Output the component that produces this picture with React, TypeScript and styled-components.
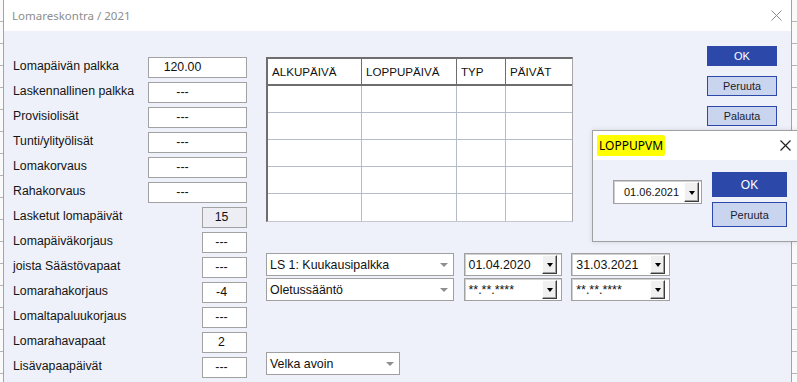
import styled, { createGlobalStyle } from 'styled-components'

const GlobalStyle = createGlobalStyle`
  html, body {
    margin: 0;
    padding: 0;
  }
  body {
    background: repeating-linear-gradient(to bottom, #fafafa 0 21px, #b4b4b4 21px 22px);
    font-family: 'Liberation Sans', Arial, sans-serif;
    overflow: hidden;
  }
`

const Screen = styled.div`
  position: relative;
  width: 797px;
  height: 382px;
  overflow: hidden;
`

const Dialog = styled.div`
  margin-left: 3px;
  width: 789px;
  height: 382px;
  box-sizing: border-box;
  border-left: 1px solid #a3a3a3;
  border-right: 1px solid #a3a3a3;
  background: #eef1fa;
  display: flex;
  flex-direction: column;
`

const TitleBar = styled.div<{ $height: number; $padLeft: number; $padRight: number }>`
  flex: none;
  height: ${p => p.$height}px;
  background: #fff;
  display: flex;
  align-items: center;
  justify-content: space-between;
  padding: 0 ${p => p.$padRight}px 0 ${p => p.$padLeft}px;
`

const WindowTitle = styled.span`
  font-family: 'Noto Sans', 'Open Sans', sans-serif;
  font-size: 11.5px;
  color: #8d8d8d;
`

const HighlightTitle = styled.span`
  font-family: 'Noto Sans', 'Open Sans', sans-serif;
  font-size: 12px;
  color: #000;
  background: #ffff00;
  padding: 2px 2px 2px 2px;
  border-radius: 2px;
`

const Body = styled.div`
  display: flex;
  align-items: flex-start;
  padding: 15px 0 0 9px;
`

const Form = styled.div`
  width: 234px;
  margin-top: 9px;
  display: flex;
  flex-direction: column;
`

const FormRow = styled.div`
  height: 25px;
  display: flex;
  align-items: center;
  justify-content: space-between;
`

const Label = styled.span`
  font-size: 12.3px;
  color: #141414;
  padding-bottom: 3px;
`

const ValueBox = styled.div<{ $wide?: boolean; $readOnly?: boolean }>`
  width: ${p => (p.$wide ? 99 : 45)}px;
  height: 21px;
  box-sizing: border-box;
  border: 1px solid #a2a2a2;
  background: ${p => (p.$readOnly ? '#eceef4' : '#fff')};
  display: flex;
  align-items: center;
  justify-content: center;
  padding-right: ${p => (p.$wide ? 30 : 6)}px;
  padding-bottom: 1px;
  font-size: 12.3px;
  color: #111;
`

const Center = styled.div`
  width: 404px;
  margin: 11px 0 0 19px;
  display: flex;
  flex-direction: column;
`

const Grid = styled.table`
  width: 307px;
  border-collapse: separate;
  border-spacing: 0;
  background: #fff;
  border-top: 2px solid #6e6e6e;
  border-left: 2px solid #6e6e6e;
  border-right: 1px solid #a8a8a8;
  border-bottom: 1px solid #c3c7d2;
  table-layout: fixed;
`

const HeadCell = styled.th<{ $w: number }>`
  width: ${p => p.$w}px;
  height: 27px;
  box-sizing: border-box;
  padding: 0 0 1px 4px;
  text-align: left;
  font-weight: normal;
  font-size: 11.6px;
  color: #111;
  border-right: 1px solid #6e6e6e;
  border-bottom: 2px solid #6e6e6e;
  &:last-child {
    border-right: none;
  }
`

const Cell = styled.td`
  height: 27px;
  box-sizing: border-box;
  padding: 0;
  border-right: 1px solid #b6bbc9;
  border-bottom: 1px solid #b6bbc9;
  &:last-child {
    border-right: none;
  }
  tr:last-child & {
    border-bottom: none;
  }
`

const ComboRow = styled.div<{ $top: number }>`
  display: flex;
  margin-top: ${p => p.$top}px;
`

const Select = styled.div<{ $w: number }>`
  width: ${p => p.$w}px;
  height: 23px;
  box-sizing: border-box;
  border: 1px solid #a0a0a0;
  background: #fff;
  display: flex;
  align-items: center;
  justify-content: space-between;
  padding: 0 5px 0 3px;
  font-size: 12.4px;
  color: #111;
  &::after {
    content: '';
    border-left: 4px solid transparent;
    border-right: 4px solid transparent;
    border-top: 4px solid #8e8e8e;
  }
`

const DateBox = styled.div<{ $w: number; $h: number; $gap: number; $size: number; $pad: number }>`
  width: ${p => p.$w}px;
  height: ${p => p.$h}px;
  margin-left: ${p => p.$gap}px;
  box-sizing: border-box;
  border: 1px solid #a0a0a0;
  box-shadow: inset 1px 1px 0 #d0d0d0;
  background: #fff;
  display: flex;
  align-items: center;
  padding-left: ${p => p.$pad}px;
  font-size: ${p => p.$size}px;
  color: #111;
`

const DateText = styled.span`
  flex: 1;
`

const DropButton = styled.span<{ $h: number; $right: number }>`
  width: 15px;
  height: ${p => p.$h}px;
  margin-right: ${p => p.$right}px;
  box-sizing: border-box;
  background: #f0f0f0;
  border: 1px solid;
  border-color: #fdfdfd #3c3c3c #3c3c3c #fdfdfd;
  box-shadow: inset -1px -1px 0 #a0a0a0;
  display: flex;
  align-items: center;
  justify-content: center;
  &::after {
    content: '';
    margin-top: 1px;
    border-left: 3.5px solid transparent;
    border-right: 3.5px solid transparent;
    border-top: 4px solid #000;
  }
`

const ButtonColumn = styled.div<{ $gap: number; $left: number; $top: number }>`
  display: flex;
  flex-direction: column;
  gap: ${p => p.$gap}px;
  margin: ${p => p.$top}px 0 0 ${p => p.$left}px;
`

const ActionButton = styled.button<{ $primary?: boolean; $w: number; $h: number; $size: number }>`
  width: ${p => p.$w}px;
  height: ${p => p.$h}px;
  box-sizing: border-box;
  padding: 0;
  font-family: 'Liberation Sans', Arial, sans-serif;
  font-size: ${p => p.$size}px;
  color: ${p => (p.$primary ? '#fff' : '#1b1b2b')};
  background: ${p => (p.$primary ? '#2c49a9' : '#c9d5ef')};
  border: 1px solid #2c49a9;
  border-radius: 0;
`

const Popup = styled.div`
  position: absolute;
  left: 592px;
  top: 130px;
  width: 212px;
  height: 112px;
  box-sizing: border-box;
  border: 1px solid #a0a0a0;
  background: #eef1fa;
  box-shadow: 0 0 5px rgba(0, 0, 0, 0.12);
  display: flex;
  flex-direction: column;
`

const PopupBody = styled.div`
  display: flex;
  align-items: flex-start;
  padding: 12px 0 0 20px;
`

const PopupDate = styled.div`
  margin-top: 8px;
  margin-right: 10px;
`

const CloseIcon = ({ color, width }: { color: string; width: number }) => (
  <svg width="11" height="11" viewBox="0 0 11 11">
    <path d="M0.5 0.5 L10.5 10.5 M10.5 0.5 L0.5 10.5" stroke={color} strokeWidth={width} fill="none" />
  </svg>
)

const rows = [
  { label: 'Lomapäivän palkka', value: '120.00', wide: true },
  { label: 'Laskennallinen palkka', value: '---', wide: true },
  { label: 'Provisiolisät', value: '---', wide: true },
  { label: 'Tunti/ylityölisät', value: '---', wide: true },
  { label: 'Lomakorvaus', value: '---', wide: true },
  { label: 'Rahakorvaus', value: '---', wide: true },
  { label: 'Lasketut lomapäivät', value: '15', readOnly: true },
  { label: 'Lomapäiväkorjaus', value: '---' },
  { label: 'joista Säästövapaat', value: '---' },
  { label: 'Lomarahakorjaus', value: '-4' },
  { label: 'Lomaltapaluukorjaus', value: '---' },
  { label: 'Lomarahavapaat', value: '2' },
  { label: 'Lisävapaapäivät', value: '---' },
]

const columns = [
  { title: 'ALKUPÄIVÄ', w: 94 },
  { title: 'LOPPUPÄIVÄ', w: 95 },
  { title: 'TYP', w: 49 },
  { title: 'PÄIVÄT', w: 66 },
]

const DateField = ({ value, gap }: { value: string; gap: number }) => (
  <DateBox $w={99} $h={23} $gap={gap} $size={12.4} $pad={4}>
    <DateText>{value}</DateText>
    <DropButton $h={19} $right={4} />
  </DateBox>
)

const App = () => (
  <Screen>
    <GlobalStyle />
    <Dialog>
      <TitleBar $height={31} $padLeft={8} $padRight={9}>
        <WindowTitle>Lomareskontra / 2021</WindowTitle>
        <CloseIcon color="#8c8c8c" width={1} />
      </TitleBar>
      <Body>
        <Form>
          {rows.map(r => (
            <FormRow key={r.label}>
              <Label>{r.label}</Label>
              <ValueBox $wide={r.wide} $readOnly={r.readOnly}>{r.value}</ValueBox>
            </FormRow>
          ))}
        </Form>
        <Center>
          <Grid>
            <thead>
              <tr>
                {columns.map(c => (
                  <HeadCell key={c.title} $w={c.w}>{c.title}</HeadCell>
                ))}
              </tr>
            </thead>
            <tbody>
              {[0, 1, 2, 3, 4].map(i => (
                <tr key={i}>
                  {columns.map(c => <Cell key={c.title} />)}
                </tr>
              ))}
            </tbody>
          </Grid>
          <ComboRow $top={31}>
            <Select $w={188}>LS 1: Kuukausipalkka</Select>
            <DateField value="01.04.2020" gap={10} />
            <DateField value="31.03.2021" gap={9} />
          </ComboRow>
          <ComboRow $top={2}>
            <Select $w={188}>Oletussääntö</Select>
            <DateField value="**.**.****" gap={10} />
            <DateField value="**.**.****" gap={9} />
          </ComboRow>
          <ComboRow $top={51}>
            <Select $w={134}>Velka avoin</Select>
          </ComboRow>
        </Center>
        <ButtonColumn $gap={10} $left={37} $top={0}>
          <ActionButton $primary $w={70} $h={20} $size={11}>OK</ActionButton>
          <ActionButton $w={70} $h={20} $size={10.8}>Peruuta</ActionButton>
          <ActionButton $w={70} $h={20} $size={10.8}>Palauta</ActionButton>
        </ButtonColumn>
      </Body>
    </Dialog>
    <Popup>
      <TitleBar $height={29} $padLeft={4} $padRight={12}>
        <HighlightTitle>LOPPUPVM</HighlightTitle>
        <CloseIcon color="#222" width={1.2} />
      </TitleBar>
      <PopupBody>
        <PopupDate>
          <DateBox $w={89} $h={24} $gap={0} $size={11} $pad={10}>
            <DateText>01.06.2021</DateText>
            <DropButton $h={20} $right={2} />
          </DateBox>
        </PopupDate>
        <ButtonColumn $gap={5} $left={0} $top={0}>
          <ActionButton $primary $w={75} $h={25} $size={12}>OK</ActionButton>
          <ActionButton $w={75} $h={25} $size={11}>Peruuta</ActionButton>
        </ButtonColumn>
      </PopupBody>
    </Popup>
  </Screen>
)

export default App
